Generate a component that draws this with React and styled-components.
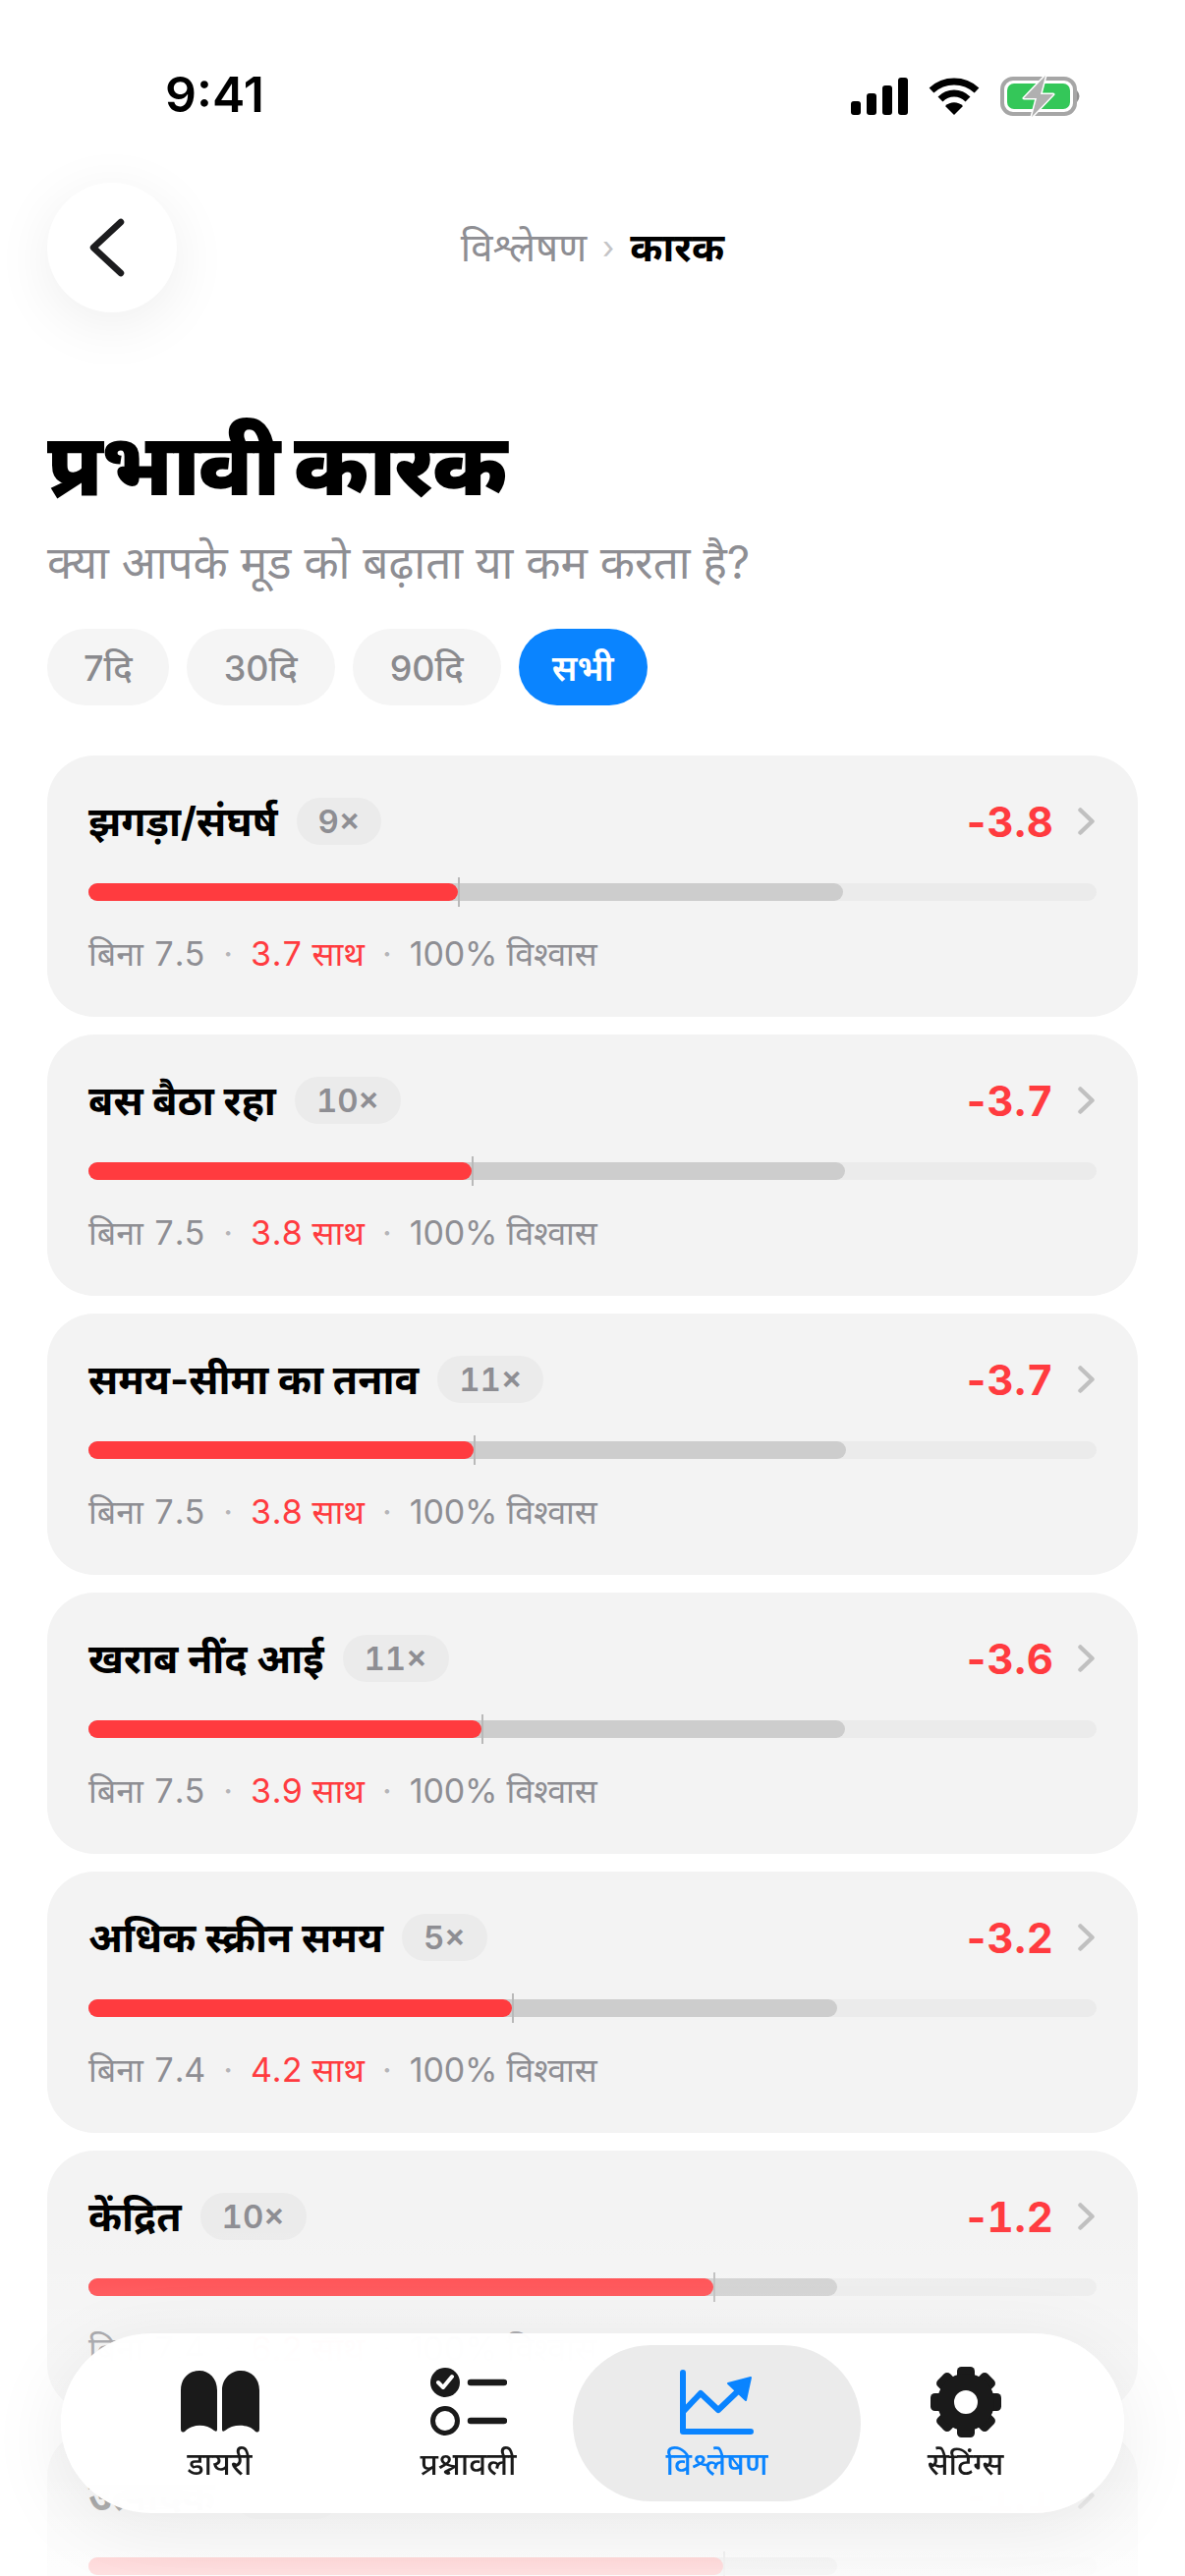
import React from "react";
import styled, { createGlobalStyle } from "styled-components";

const FONT = `Inter, "Noto Sans", "Noto Sans Devanagari", "Lohit Devanagari", sans-serif`;

const Global = createGlobalStyle`
  html, body { margin: 0; padding: 0; background: #fff; overflow: hidden; }
  * { box-sizing: border-box; }
`;

const Screen = styled.div`
  position: relative; width: 1206px; height: 2622px; overflow: hidden;
  background: #fff; font-family: ${FONT}; color: #000;
`;
const StatusBar = styled.div`
  height: 186px; padding: 71px 104px 0 168px; display: flex; justify-content: space-between; align-items: flex-start;
`;
const Clock = styled.div`
  font-size: 50px; line-height: 50px; font-weight: 600; letter-spacing: 0;
`;
const StatusIcons = styled.div`
  display: flex; align-items: center; gap: 21px; height: 42px; margin-top: 6px;
`;
const Header = styled.div`
  display: grid; grid-template-columns: 180px 1fr 180px; padding-left: 48px; align-items: center; height: 132px;
`;
const BackButton = styled.div`
  width: 132px; height: 132px; border-radius: 50%; background: #fff; padding-right: 10px;
  box-shadow: 0 12px 60px rgba(0,0,0,.07); display: flex; align-items: center; justify-content: center;
`;
const Crumbs = styled.div`
  display: flex; justify-content: center; align-items: center; gap: 16px; font-size: 40px; line-height: 44px; margin-left: -48px;
`;
const CrumbMuted = styled.span` color: #8e8e93; `;
const CrumbSep = styled.span` color: #c4c4c6; font-size: 32px; `;
const CrumbNow = styled.span` color: #000; font-weight: 700; `;
const Intro = styled.div` padding: 94px 48px 0; `;
const Title = styled.h1`
  margin: 0; font-size: 88px; line-height: 120px; font-weight: 900; letter-spacing: -2px;
`;
const Subtitle = styled.p`
  margin: 11px 0 0; font-size: 45.8px; line-height: 60px; color: #8e8e93;
`;
const Chips = styled.div` display: flex; gap: 18px; margin-top: 37px; `;
const Chip = styled.div`
  height: 78px; padding: 0 ${p => p.$pad}px; border-radius: 39px; display: flex; align-items: center;
  font-size: 36px; font-weight: ${p => p.$active ? 600 : 500};
  background: ${p => p.$active ? "#0a84ff" : "#f5f5f5"};
  color: ${p => p.$active ? "#fff" : "#8a8a8e"};
`;
const List = styled.div` display: flex; flex-direction: column; gap: 18px; margin: 51px 48px 0; `;
const Card = styled.div`
  height: 266px; border-radius: 48px; background: #f3f3f3; padding: 42px 42px 0;
`;
const CardTop = styled.div` display: flex; align-items: center; height: 50px; `;
const CardName = styled.div` font-size: 41px; line-height: 50px; font-weight: 700; `;
const Count = styled.div`
  margin-left: 19px; height: 48px; padding: 0 22px; border-radius: 24px; background: #ebebeb;
  color: #8e8e93; font-size: 33px; font-weight: 600; display: flex; align-items: center;
  font-variant-numeric: tabular-nums;
`;
const Delta = styled.div`
  margin-left: auto; color: #ff3b3f; font-size: 42px; font-weight: 700; letter-spacing: 1px;
`;
const DeltaNum = styled.span` font-variant-numeric: tabular-nums; `;
const Chevron = styled.svg` margin-left: 24px; margin-right: 2px; `;
const Bar = styled.div`
  position: relative; height: 18px; margin-top: 38px; background: #ebebeb; border-radius: 9px;
`;
const BarBase = styled.div`
  height: 100%; border-radius: 9px; background: #cdcdcd; position: relative;
`;
const BarFill = styled.div`
  position: absolute; left: 0; top: 0; height: 18px; border-radius: 9px; background: #ff3b3f;
`;
const BarMark = styled.div`
  position: absolute; top: -6px; width: 2px; height: 30px; background: #b9b9b9;
`;
const Meta = styled.div`
  margin-top: 31px; display: flex; align-items: center; font-size: 34px; line-height: 46px; color: #8e8e93;
`;
const MetaLead = styled.span` font-variant-numeric: tabular-nums; word-spacing: 1px; `;
const Dot = styled.span` color: #b5b5b8; margin: 0 18px; `;
const MetaRed = styled.span` color: #ff3b3f; font-variant-numeric: tabular-nums; `;
const MetaRest = styled.span` letter-spacing: -.2px; `;
const Fade = styled.div`
  position: absolute; left: 0; right: 0; bottom: 0; height: 360px; pointer-events: none;
  background: linear-gradient(to bottom, rgba(255,255,255,0) 0%, rgba(255,255,255,.85) 100%);
`;
const Nav = styled.div`
  position: absolute; left: 62px; top: 2375px; width: 1082px; height: 183px; border-radius: 92px;
  background: rgba(255,255,255,.96); backdrop-filter: blur(24px); box-shadow: 0 16px 80px rgba(0,0,0,.08);
  display: flex; justify-content: center; align-items: stretch; padding: 12px 0;
`;
const NavItem = styled.div`
  width: ${p => p.$active ? 293 : 253}px; margin: 0 ${p => p.$active ? -20 : 0}px; border-radius: 80px;
  background: ${p => p.$active ? "#ebebeb" : "transparent"};
  color: ${p => p.$active ? "#0a84ff" : "#1a1a1a"};
  display: flex; flex-direction: column; align-items: center; padding-top: 22px;
`;
const NavIcon = styled.div` height: 72px; display: flex; align-items: center; justify-content: center; `;
const NavLabel = styled.div` margin-top: 7px; font-size: 31.5px; line-height: 40px; font-weight: 500; `;

const Signal = () => (
  <svg width="58" height="38" viewBox="0 0 58 38">
    <rect x="0" y="24" width="10" height="14" rx="3" />
    <rect x="16" y="16" width="10" height="22" rx="3" />
    <rect x="32" y="8" width="10" height="30" rx="3" />
    <rect x="48" y="0" width="10" height="38" rx="3" />
  </svg>
);
const Wifi = () => (
  <svg width="52" height="38" viewBox="0 0 52 38" fill="none" stroke="#000" strokeWidth="7">
    <path d="M3 13 C16 1 36 1 49 13" />
    <path d="M12 22 C20 14 32 14 40 22" />
    <path d="M17 29 L26 38 L35 29 C30 24 22 24 17 29 Z" fill="#000" stroke="none" />
  </svg>
);
const Battery = () => (
  <svg width="84" height="44" viewBox="0 0 84 44">
    <rect x="2" y="4" width="74" height="36" rx="11" fill="#fff" stroke="#a6a6a6" strokeWidth="4" />
    <rect x="7" y="9" width="64" height="26" rx="7" fill="#34c759" />
    <path d="M78 16 Q83 22 78 28 Z" fill="#8e8e8e" />
    <path d="M46 1 L24 24 H37 L32 43 L54 20 H41 Z" fill="#b0b0b0" stroke="#fff" strokeWidth="3" strokeLinejoin="round" paintOrder="stroke" />
  </svg>
);
const Back = () => (
  <svg width="38" height="60" viewBox="0 0 38 60" fill="none" stroke="#1c1c1e" strokeWidth="6.5" strokeLinecap="round" strokeLinejoin="round">
    <path d="M33 4 L5 30 L33 56" />
  </svg>
);
const Chev = () => (
  <Chevron width="17" height="28" viewBox="0 0 17 28" fill="none" stroke="#c0c0c0" strokeWidth="4.5" strokeLinecap="round" strokeLinejoin="round">
    <path d="M2.5 2.5 L14.5 14 L2.5 25.5" />
  </Chevron>
);
const Book = () => (
  <svg width="80" height="64" viewBox="0 0 80 64" fill="currentColor">
    <path d="M0 20 C0 8 8 0 19 0 C29 0 37 8 37 20 V60 Q37 63 34 61 C26 54 11 54 4 62 Q0 64 0 59 Z" />
    <path d="M80 20 C80 8 72 0 61 0 C51 0 42 8 42 20 V60 Q42 63 45 61 C53 54 69 54 76 62 Q80 64 80 59 Z" />
  </svg>
);
const Checklist = () => (
  <svg width="78" height="70" viewBox="0 0 78 70" fill="none">
    <circle cx="15" cy="15" r="15" fill="currentColor" />
    <path d="M8 15 L13 20 L22 9" stroke="#fff" strokeWidth="4" strokeLinecap="round" strokeLinejoin="round" />
    <circle cx="15" cy="54" r="12.5" stroke="currentColor" strokeWidth="5" />
    <path d="M41 15 H75 M41 54 H75" stroke="currentColor" strokeWidth="6.5" strokeLinecap="round" />
  </svg>
);
const Chart = () => (
  <svg width="76" height="66" viewBox="0 0 76 66" fill="none" stroke="currentColor" strokeWidth="6" strokeLinecap="round" strokeLinejoin="round">
    <path d="M3 3 V63 H72" />
    <path d="M3 43 L21 24 L39 41 L62 19" />
    <path d="M72 8 L49 14 L67 31 Z" fill="currentColor" strokeWidth="2" />
  </svg>
);
const Gear = () => (
  <svg width="72" height="72" viewBox="-36 -36 72 72" fill="currentColor">
    {[0, 45, 90, 135, 180, 225, 270, 315].map(a => (
      <rect key={a} x="-9" y="-36" width="18" height="16" rx="4.5" transform={`rotate(${a})`} />
    ))}
    <circle r="20.5" fill="none" stroke="currentColor" strokeWidth="17" />
  </svg>
);

const rows = [
  { name: "झगड़ा/संघर्ष", n: "9×", d: "3.8", a: "7.5", b: "3.7", red: 36.6, base: 74.9 },
  { name: "बस बैठा रहा", n: "10×", d: "3.7", a: "7.5", b: "3.8", red: 38, base: 75 },
  { name: "समय-सीमा का तनाव", n: "11×", d: "3.7", a: "7.5", b: "3.8", red: 38.2, base: 75.1 },
  { name: "खराब नींद आई", n: "11×", d: "3.6", a: "7.5", b: "3.9", red: 39, base: 75 },
  { name: "अधिक स्क्रीन समय", n: "5×", d: "3.2", a: "7.4", b: "4.2", red: 42, base: 74.3 },
  { name: "केंद्रित", n: "10×", d: "1.2", a: "7.4", b: "6.2", red: 62, base: 74.3 },
  { name: "उत्पादक", n: "10×", d: "1.1", a: "7.4", b: "6.3", red: 63, base: 74.3 },
];

const nav = [
  { label: "डायरी", Icon: Book },
  { label: "प्रश्नावली", Icon: Checklist },
  { label: "विश्लेषण", Icon: Chart, active: true },
  { label: "सेटिंग्स", Icon: Gear },
];

export default function App() {
  return (
    <Screen>
      <Global />
      <StatusBar>
        <Clock>9:41</Clock>
        <StatusIcons><Signal /><Wifi /><Battery /></StatusIcons>
      </StatusBar>
      <Header>
        <BackButton><Back /></BackButton>
        <Crumbs>
          <CrumbMuted>विश्लेषण</CrumbMuted>
          <CrumbSep>›</CrumbSep>
          <CrumbNow>कारक</CrumbNow>
        </Crumbs>
      </Header>
      <Intro>
        <Title>प्रभावी कारक</Title>
        <Subtitle>क्या आपके मूड को बढ़ाता या कम करता है?</Subtitle>
        <Chips>
          <Chip $pad={37}>7दि</Chip>
          <Chip $pad={38}>30दि</Chip>
          <Chip $pad={38}>90दि</Chip>
          <Chip $pad={34} $active>सभी</Chip>
        </Chips>
      </Intro>
      <List>
        {rows.map(r => (
          <Card key={r.name}>
            <CardTop>
              <CardName>{r.name}</CardName>
              <Count>{r.n}</Count>
              <Delta>-<DeltaNum>{r.d}</DeltaNum></Delta>
              <Chev />
            </CardTop>
            <Bar>
              <BarBase style={{ width: `${r.base}%` }} />
              <BarFill style={{ width: `${r.red}%` }} />
              <BarMark style={{ left: `${r.red}%` }} />
            </Bar>
            <Meta>
              <MetaLead>बिना {r.a}</MetaLead><Dot>·</Dot>
              <MetaRed>{r.b} साथ</MetaRed><Dot>·</Dot>
              <MetaRest>100% विश्वास</MetaRest>
            </Meta>
          </Card>
        ))}
      </List>
      <Fade />
      <Nav>
        {nav.map(({ label, Icon, active }) => (
          <NavItem key={label} $active={active}>
            <NavIcon><Icon /></NavIcon>
            <NavLabel>{label}</NavLabel>
          </NavItem>
        ))}
      </Nav>
    </Screen>
  );
}
